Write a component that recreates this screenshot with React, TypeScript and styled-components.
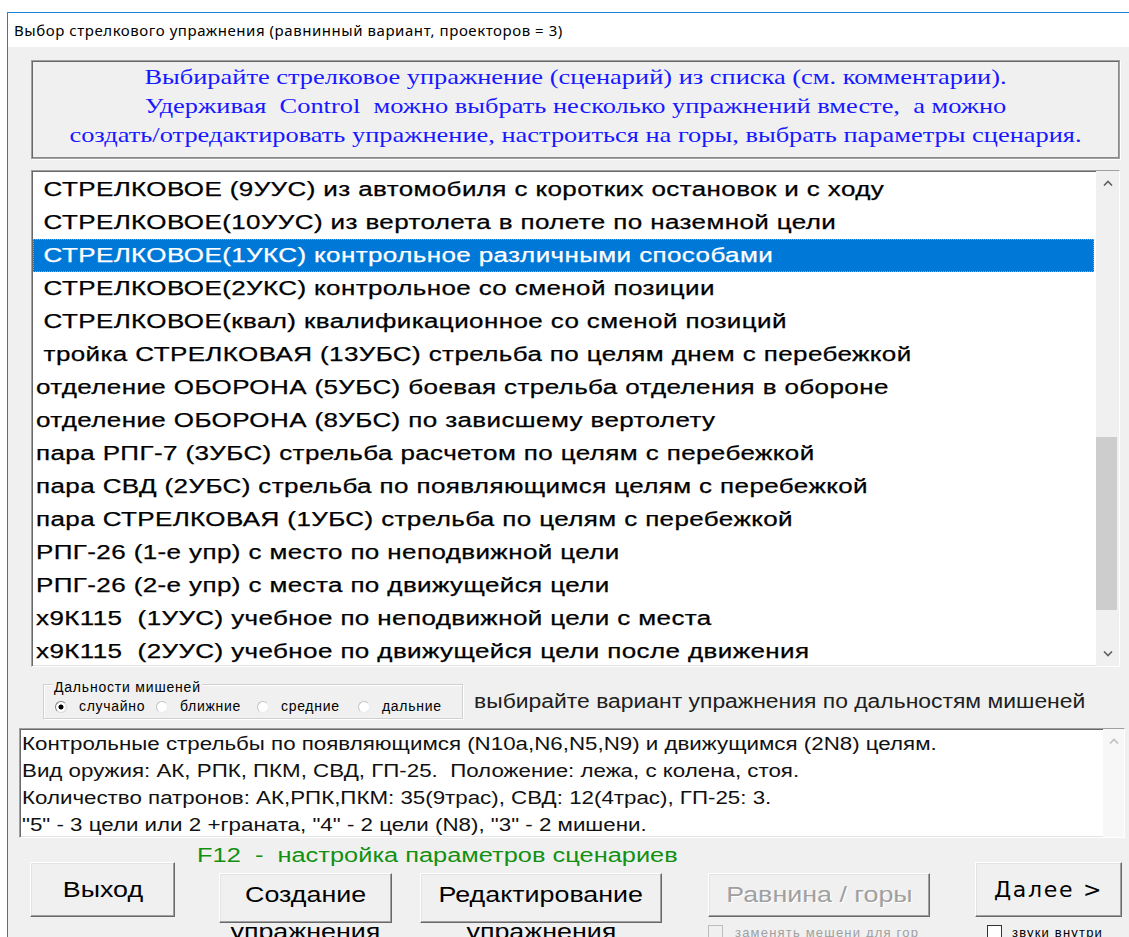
import styled, { createGlobalStyle } from 'styled-components'

const GlobalStyle = createGlobalStyle`
  html, body {
    margin: 0;
    padding: 0;
    background: #ffffff;
    overflow: hidden;
  }
  body {
    font-family: "Liberation Sans", Arial, sans-serif;
    color: #000;
  }
`

const sunken = `
  border: 1px solid #a0a0a0;
  border-right-color: #ffffff;
  border-bottom-color: #ffffff;
  box-shadow: inset 1px 1px 0 #696969, inset -1px -1px 0 #e3e3e3;
`

/* the dialog draws its text stretched sideways, so captions get a scaleX */
const stretched = (k: number, origin = '0 50%') => `
  transform: scaleX(${k});
  transform-origin: ${origin};
`

const Window = styled.div`
  margin: 12px 0 0 7px;
  height: 925px;
  border-top: 1px solid #1a82d8;
  border-left: 1px solid #1a82d8;
  display: flex;
  flex-direction: column;
  overflow: hidden;
`

const TitleBar = styled.div`
  flex: none;
  height: 34px;
  padding-left: 6px;
  display: flex;
  align-items: center;
  background: #fff;
  font-family: "Noto Sans", "Open Sans", sans-serif;
  font-size: 15px;
  letter-spacing: 0.55px;
  color: #000;
`

const Client = styled.div`
  flex: 1;
  background: #f0f0f0;
  padding-top: 13px;
  display: flex;
  flex-direction: column;
`

const InfoBox = styled.div`
  margin-left: 23px;
  width: 1089px;
  height: 99px;
  box-sizing: border-box;
  border: 1px solid #a0a0a0;
  box-shadow: inset 1px 1px 0 #696969, inset -1px -1px 0 #8a8a8a, 1px 1px 0 #fff;
  padding-top: 1px;
  font-family: "Liberation Serif", "Times New Roman", serif;
  font-size: 22px;
  line-height: 29px;
  color: #1818ff;
  text-align: center;
`

const InfoLine = styled.div`
  white-space: pre;
  ${stretched(1.2, '50% 50%')}
`

const ListBox = styled.div`
  margin: 11px 0 0 23px;
  width: 1089px;
  height: 497px;
  box-sizing: border-box;
  ${sunken}
  background: #fff;
  display: flex;
`

const Items = styled.div`
  flex: 1;
  padding: 2px 2px 0 1px;
  overflow: hidden;
`

const Item = styled.div<{ $selected?: boolean }>`
  height: 33px;
  line-height: 31px;
  box-sizing: border-box;
  padding-left: 2px;
  font-size: 20px;
  color: ${p => (p.$selected ? '#fff' : '#000')};
  background: ${p => (p.$selected ? '#0078d7' : 'transparent')};
  border: 1px dotted ${p => (p.$selected ? '#ff8728' : 'transparent')};
`

const ItemText = styled.span`
  display: inline-block;
  white-space: pre;
  letter-spacing: 0.3px;
  -webkit-text-stroke: 0.25px currentColor;
  ${stretched(1.3)}
`

const ScrollBar = styled.div<{ $width: number; $bg: string }>`
  flex: none;
  width: ${p => p.$width}px;
  background: ${p => p.$bg};
  display: flex;
  flex-direction: column;
`

const ScrollArrow = styled.div`
  flex: none;
  height: 24px;
  display: flex;
  align-items: center;
  justify-content: center;
`

const ScrollTrack = styled.div`
  flex: 1;
  display: flex;
  flex-direction: column;
`

const ScrollThumb = styled.div`
  margin-right: 2px;
  background: #cdcdcd;
`

const RangeRow = styled.div`
  margin: 17px 0 0 35px;
  display: flex;
  align-items: center;
  gap: 11px;
`

const GroupBox = styled.div`
  position: relative;
  width: 420px;
  height: 35px;
  box-sizing: border-box;
  border: 1px solid #d0d0d0;
  box-shadow: inset 1px 1px 0 #fff, 1px 1px 0 #fff;
  display: flex;
  align-items: flex-end;
  padding: 0 0 4px 11px;
`

const GroupTitle = styled.span`
  position: absolute;
  left: 9px;
  top: -5px;
  padding: 0 1px;
  background: #f0f0f0;
  font-size: 14px;
  line-height: 14px;
  letter-spacing: 0.8px;
`

const RadioItem = styled.label`
  width: 101px;
  display: flex;
  align-items: center;
  gap: 12px;
  font-size: 14px;
  line-height: 15px;
  letter-spacing: 0.7px;
`

const RadioDot = styled.span<{ $checked?: boolean }>`
  flex: none;
  width: 12px;
  height: 12px;
  box-sizing: border-box;
  border-radius: 50%;
  border: 1px solid;
  border-color: ${p => (p.$checked ? '#808080 #d8d8d8 #d8d8d8 #808080' : '#c4c4c4 #ececec #ececec #c4c4c4')};
  background: ${p => (p.$checked ? 'radial-gradient(circle, #000 0 2.2px, #fff 2.8px)' : '#fff')};
`

const RangeHint = styled.span`
  font-size: 20px;
  color: #202020;
  white-space: nowrap;
  ${stretched(1.145)}
`

const Memo = styled.div`
  margin: 9px 0 0 11px;
  width: 1106px;
  height: 110px;
  box-sizing: border-box;
  ${sunken}
  background: #fff;
  display: flex;
  overflow: hidden;
`

const MemoText = styled.div`
  flex: 1;
  padding: 2px 0 0 2px;
  font-size: 18px;
  line-height: 27px;
  color: #111;
`

const MemoLine = styled.div`
  white-space: pre;
  ${stretched(1.24)}
`

const Hint = styled.div`
  margin: 7px 0 0 189px;
  height: 20px;
  line-height: 20px;
  font-size: 20px;
  white-space: pre;
  color: #129012;
  ${stretched(1.27)}
`

const ButtonRow = styled.div`
  margin-top: -3px;
  display: flex;
  align-items: flex-start;
`

const Slot = styled.div<{ $left: number; $top: number; $width: number }>`
  flex: none;
  margin-left: ${p => p.$left}px;
  margin-top: ${p => p.$top}px;
  width: ${p => p.$width}px;
  display: flex;
  flex-direction: column;
`

const Button = styled.button<{ $height: number; $multiline?: boolean }>`
  height: ${p => p.$height}px;
  width: 100%;
  box-sizing: border-box;
  margin: 0;
  padding: ${p => (p.$multiline ? '4px 0 0' : '0')};
  display: flex;
  flex-direction: column;
  align-items: center;
  justify-content: ${p => (p.$multiline ? 'flex-start' : 'center')};
  overflow: visible;
  background: #f0f0f0;
  border: 1px solid;
  border-color: #fff #696969 #696969 #fff;
  box-shadow: inset -1px -1px 0 #a0a0a0, inset 1px 1px 0 #e3e3e3;
  font-family: "Liberation Sans", Arial, sans-serif;
  font-size: 22px;
  line-height: 34px;
  white-space: nowrap;
  color: #000;

  &:disabled {
    color: #a0a0a0;
    text-shadow: 1px 1px 0 #fff;
  }
`

const Caption = styled.span<{ $tail?: boolean }>`
  margin-top: ${p => (p.$tail ? 3 : 0)}px;
  ${stretched(1.22, '50% 50%')}
`

const StrongCaption = styled.span`
  font-family: "DejaVu Sans", "Liberation Sans", sans-serif;
  font-size: 22px;
  letter-spacing: 1.7px;
`

const CheckRow = styled.label<{ $indent: number; $disabled?: boolean }>`
  margin: 8px 0 0 ${p => p.$indent}px;
  display: flex;
  align-items: center;
  gap: ${p => (p.$disabled ? 12 : 10)}px;
  font-size: 13px;
  line-height: 15px;
  letter-spacing: 1.2px;
  white-space: nowrap;
  color: ${p => (p.$disabled ? '#a0a0a0' : '#000')};
`

const CheckBox = styled.span<{ $disabled?: boolean }>`
  flex: none;
  width: 15px;
  height: 15px;
  box-sizing: border-box;
  border: 1px solid ${p => (p.$disabled ? '#bcbcbc' : '#333')};
  background: ${p => (p.$disabled ? '#f0f0f0' : '#fff')};
`

const Chevron = ({ up, color = '#606060' }: { up?: boolean; color?: string }) => (
  <svg width="10" height="6" viewBox="0 0 10 6">
    <polyline
      points={up ? '1,5.5 5,1.5 9,5.5' : '1,0.5 5,4.5 9,0.5'}
      fill="none"
      stroke={color}
      strokeWidth="1.6"
    />
  </svg>
)

const exercises = [
  ' СТРЕЛКОВОЕ (9УУС) из автомобиля с коротких остановок и с ходу',
  ' СТРЕЛКОВОЕ(10УУС) из вертолета в полете по наземной цели',
  ' СТРЕЛКОВОЕ(1УКС) контрольное различными способами',
  ' СТРЕЛКОВОЕ(2УКС) контрольное со сменой позиции',
  ' СТРЕЛКОВОЕ(квал) квалификационное со сменой позиций',
  ' тройка СТРЕЛКОВАЯ (13УБС) стрельба по целям днем с перебежкой',
  'отделение ОБОРОНА (5УБС) боевая стрельба отделения в обороне',
  'отделение ОБОРОНА (8УБС) по зависшему вертолету',
  'пара РПГ-7 (3УБС) стрельба расчетом по целям с перебежкой',
  'пара СВД (2УБС) стрельба по появляющимся целям с перебежкой',
  'пара СТРЕЛКОВАЯ (1УБС) стрельба по целям с перебежкой',
  'РПГ-26 (1-е упр) с место по неподвижной цели',
  'РПГ-26 (2-е упр) с места по движущейся цели',
  'х9К115  (1УУС) учебное по неподвижной цели с места',
  'х9К115  (2УУС) учебное по движущейся цели после движения',
]

const info = [
  'Выбирайте стрелковое упражнение (сценарий) из списка (см. комментарии).',
  'Удерживая  Control  можно выбрать несколько упражнений вместе,  а можно',
  'создать/отредактировать упражнение, настроиться на горы, выбрать параметры сценария.',
]

const ranges = ['случайно', 'ближние', 'средние', 'дальние']

const comment = [
  'Контрольные стрельбы по появляющимся (N10а,N6,N5,N9) и движущимся (2N8) целям.',
  'Вид оружия: АК, РПК, ПКМ, СВД, ГП-25.  Положение: лежа, с колена, стоя.',
  'Количество патронов: АК,РПК,ПКМ: 35(9трас), СВД: 12(4трас), ГП-25: 3.',
  '"5" - 3 цели или 2 +граната, "4" - 2 цели (N8), "3" - 2 мишени.',
]

const selected = 2
const thumb = { top: 242, height: 173 }

export default function App() {
  return (
    <>
      <GlobalStyle />
      <Window>
        <TitleBar>Выбор стрелкового упражнения (равнинный вариант, проекторов = 3)</TitleBar>
        <Client>
          <InfoBox>
            {info.map(line => (
              <InfoLine key={line}>{line}</InfoLine>
            ))}
          </InfoBox>

          <ListBox>
            <Items>
              {exercises.map((name, i) => (
                <Item key={name} $selected={i === selected}>
                  <ItemText>{name}</ItemText>
                </Item>
              ))}
            </Items>
            <ScrollBar $width={23} $bg="#f0f0f0">
              <ScrollArrow><Chevron up /></ScrollArrow>
              <ScrollTrack>
                <ScrollThumb style={{ marginTop: thumb.top, height: thumb.height }} />
              </ScrollTrack>
              <ScrollArrow><Chevron /></ScrollArrow>
            </ScrollBar>
          </ListBox>

          <RangeRow>
            <GroupBox>
              <GroupTitle>Дальности мишеней</GroupTitle>
              {ranges.map((r, i) => (
                <RadioItem key={r}>
                  <RadioDot $checked={i === 0} />
                  {r}
                </RadioItem>
              ))}
            </GroupBox>
            <RangeHint>выбирайте вариант упражнения по дальностям мишеней</RangeHint>
          </RangeRow>

          <Memo>
            <MemoText>
              {comment.map(line => (
                <MemoLine key={line}>{line}</MemoLine>
              ))}
            </MemoText>
            <ScrollBar $width={21} $bg="#f7f7f7">
              <ScrollArrow><Chevron up color="#c0c0c0" /></ScrollArrow>
            </ScrollBar>
          </Memo>

          <Hint>{'F12  -  настройка параметров сценариев'}</Hint>

          <ButtonRow>
            <Slot $left={22} $top={0} $width={145}>
              <Button $height={55}><Caption>Выход</Caption></Button>
            </Slot>
            <Slot $left={44} $top={11} $width={173}>
              <Button $height={50} $multiline>
                <Caption>Создание</Caption>
                <Caption $tail>упражнения</Caption>
              </Button>
            </Slot>
            <Slot $left={28} $top={11} $width={242}>
              <Button $height={50} $multiline>
                <Caption>Редактирование</Caption>
                <Caption $tail>упражнения</Caption>
              </Button>
            </Slot>
            <Slot $left={46} $top={11} $width={222}>
              <Button $height={44} disabled><Caption>Равнина / горы</Caption></Button>
              <CheckRow $indent={0} $disabled>
                <CheckBox $disabled />
                заменять мешени для гор
              </CheckRow>
            </Slot>
            <Slot $left={45} $top={0} $width={147}>
              <Button $height={55}>
                <StrongCaption>Далее &gt;</StrongCaption>
              </Button>
              <CheckRow $indent={12}>
                <CheckBox />
                звуки внутри
              </CheckRow>
            </Slot>
          </ButtonRow>
        </Client>
      </Window>
    </>
  )
}
